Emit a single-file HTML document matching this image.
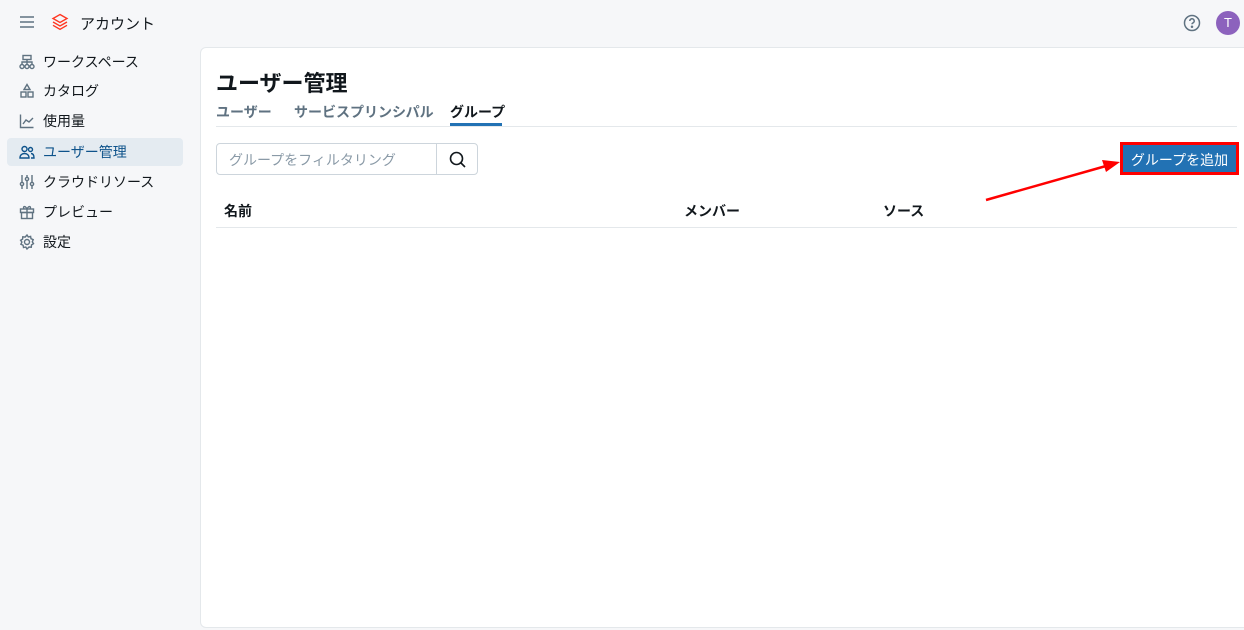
<!DOCTYPE html>
<html><head><meta charset="utf-8"><style>
*{box-sizing:border-box;margin:0;padding:0}
body{width:1244px;height:630px;background:#f6f7f9;font-family:"Liberation Sans","Noto Sans CJK JP",sans-serif;color:#11171c;position:relative;overflow:hidden;font-size:14px}
.abs{position:absolute}
.nav{position:absolute;left:7px;width:176px;height:28px;display:flex;align-items:center;padding-left:12px;font-size:14px;border-radius:4px}
.nav svg{width:16px;height:16px;margin-right:8px;fill:none;stroke:#5f7281;stroke-width:1.4}
.nav.act{background:#e4ebf1;color:#0e538b}
.nav.act svg{stroke:#0e538b}
.panel{position:absolute;left:200px;top:47px;width:1050px;height:581px;background:#fff;border:1px solid #e4e8eb;border-radius:6px}
</style></head><body>
<svg class="abs" style="left:19px;top:15px" width="16" height="14" viewBox="0 0 16 14" stroke="#5f7281" stroke-width="1.5"><path d="M1 2h14M1 7h14M1 12h14"/></svg>
<svg class="abs" style="left:51px;top:13px" width="18" height="18" viewBox="0 0 18 18" fill="none" stroke="#ff3621" stroke-width="1.4"><path d="M9 1.5L16 5.5 9 9.5 2 5.5z"/><path d="M2 9l7 4 7-4"/><path d="M2 12.3l7 4 7-4"/></svg>
<div class="abs" style="left:80px;top:13px;font-size:15px">アカウント</div>
<svg class="abs" style="left:1183px;top:14px" width="18" height="18" viewBox="0 0 18 18" fill="none" stroke="#5f7281" stroke-width="1.5"><circle cx="9" cy="9" r="7.5"/><path d="M6.8 7a2.2 2.2 0 1 1 3 2c-.6.3-.8.7-.8 1.3"/><circle cx="9" cy="12.8" r=".5" fill="#5f7281"/></svg>
<div class="abs" style="left:1216px;top:11px;width:24px;height:24px;border-radius:50%;background:#8c62bd;color:#fff;font-size:13px;text-align:center;line-height:24px">T</div>

<div class="nav" style="top:48px"><svg viewBox="0 0 16 16"><rect x="4" y="1.5" width="8" height="4"/><circle cx="3" cy="12.5" r="2"/><circle cx="8" cy="12.5" r="2"/><circle cx="13" cy="12.5" r="2"/><path d="M3 10.5V8h10v2.5M8 5.5v5"/></svg>ワークスペース</div>
<div class="nav" style="top:77px"><svg viewBox="0 0 16 16"><path d="M8 1.5l3 5H5z"/><rect x="2" y="9" width="5" height="5"/><rect x="9" y="9" width="5" height="5"/></svg>カタログ</div>
<div class="nav" style="top:107px"><svg viewBox="0 0 16 16"><path d="M1.5 1.5v13h13"/><path d="M4 11l3-4 3 2 4-4"/></svg>使用量</div>
<div class="nav act" style="top:138px"><svg viewBox="0 0 16 16"><circle cx="5.5" cy="5" r="2.5"/><path d="M1 14c0-3 2-4.5 4.5-4.5S10 11 10 14z"/><circle cx="11.5" cy="5.5" r="2"/><path d="M12 9.5c2 0 3 1.5 3 4.5h-3"/></svg>ユーザー管理</div>
<div class="nav" style="top:168px"><svg viewBox="0 0 16 16"><path d="M3 1v14M8 1v14M13 1v14"/><circle cx="3" cy="10" r="1.6" fill="#fff"/><circle cx="8" cy="5" r="1.6" fill="#fff"/><circle cx="13" cy="10" r="1.6" fill="#fff"/></svg>クラウドリソース</div>
<div class="nav" style="top:198px"><svg viewBox="0 0 16 16"><rect x="1.5" y="5" width="13" height="3.5"/><rect x="2.5" y="8.5" width="11" height="6"/><path d="M8 5v9.5M8 5C6 1 3.5 2.5 5 5M8 5c2-4 4.5-2.5 3 0"/></svg>プレビュー</div>
<div class="nav" style="top:228px"><svg viewBox="0 0 16 16"><circle cx="8" cy="8" r="2.5"/><path d="M8 1l1.3 2 2.3-.6.4 2.3 2.2.9-.9 2.2 1.2 1.9-2 1.2-.2 2.3-2.3-.2L8 15l-1.2-2-2.3.5-.4-2.3-2.2-.9 1-2.2L1.6 6.2l2-1.1.2-2.3 2.3.3z"/></svg>設定</div>

<div class="panel"></div>
<div class="abs" style="left:216px;top:66px;font-size:22px;font-weight:bold">ユーザー管理</div>
<div class="abs" style="left:216px;top:102px;font-size:14px;font-weight:bold;color:#5f7281">ユーザー</div>
<div class="abs" style="left:294px;top:102px;font-size:14px;font-weight:bold;color:#5f7281">サービスプリンシパル</div>
<div class="abs" style="left:450px;top:102px;font-size:14px;font-weight:bold">グループ</div>
<div class="abs" style="left:450px;top:123px;width:52px;height:3px;background:#2272b4"></div>
<div class="abs" style="left:216px;top:126px;width:1021px;height:1px;background:#e4e8eb"></div>

<div class="abs" style="left:216px;top:143px;width:262px;height:32px;border:1px solid #cdd5dc;border-radius:4px"></div>
<div class="abs" style="left:436px;top:144px;width:1px;height:30px;background:#cdd5dc"></div>
<div class="abs" style="left:229px;top:150px;color:#8a9aa7;font-size:14px">グループをフィルタリング</div>
<svg class="abs" style="left:449px;top:151px" width="17" height="17" viewBox="0 0 17 17" fill="none" stroke="#11171c" stroke-width="1.6"><circle cx="7.5" cy="7.5" r="6"/><path d="M12 12l4 4"/></svg>

<div class="abs" style="left:1120px;top:142px;width:119px;height:33px;border:3px solid #f00;background:#2272b4"></div>
<div class="abs" style="left:1120px;top:150px;width:119px;text-align:center;color:#fff;font-size:14px">グループを追加</div>
<svg class="abs" style="left:0;top:0" width="1244" height="630"><path d="M986 200L1106 166" stroke="#f00" stroke-width="2.5"/><path d="M1120 162L1102 160 1106 172z" fill="#f00"/></svg>

<div class="abs" style="left:224px;top:201px;font-weight:bold">名前</div>
<div class="abs" style="left:684px;top:201px;font-weight:bold">メンバー</div>
<div class="abs" style="left:883px;top:201px;font-weight:bold">ソース</div>
<div class="abs" style="left:216px;top:227px;width:1021px;height:1px;background:#e4e8eb"></div>
</body></html>
